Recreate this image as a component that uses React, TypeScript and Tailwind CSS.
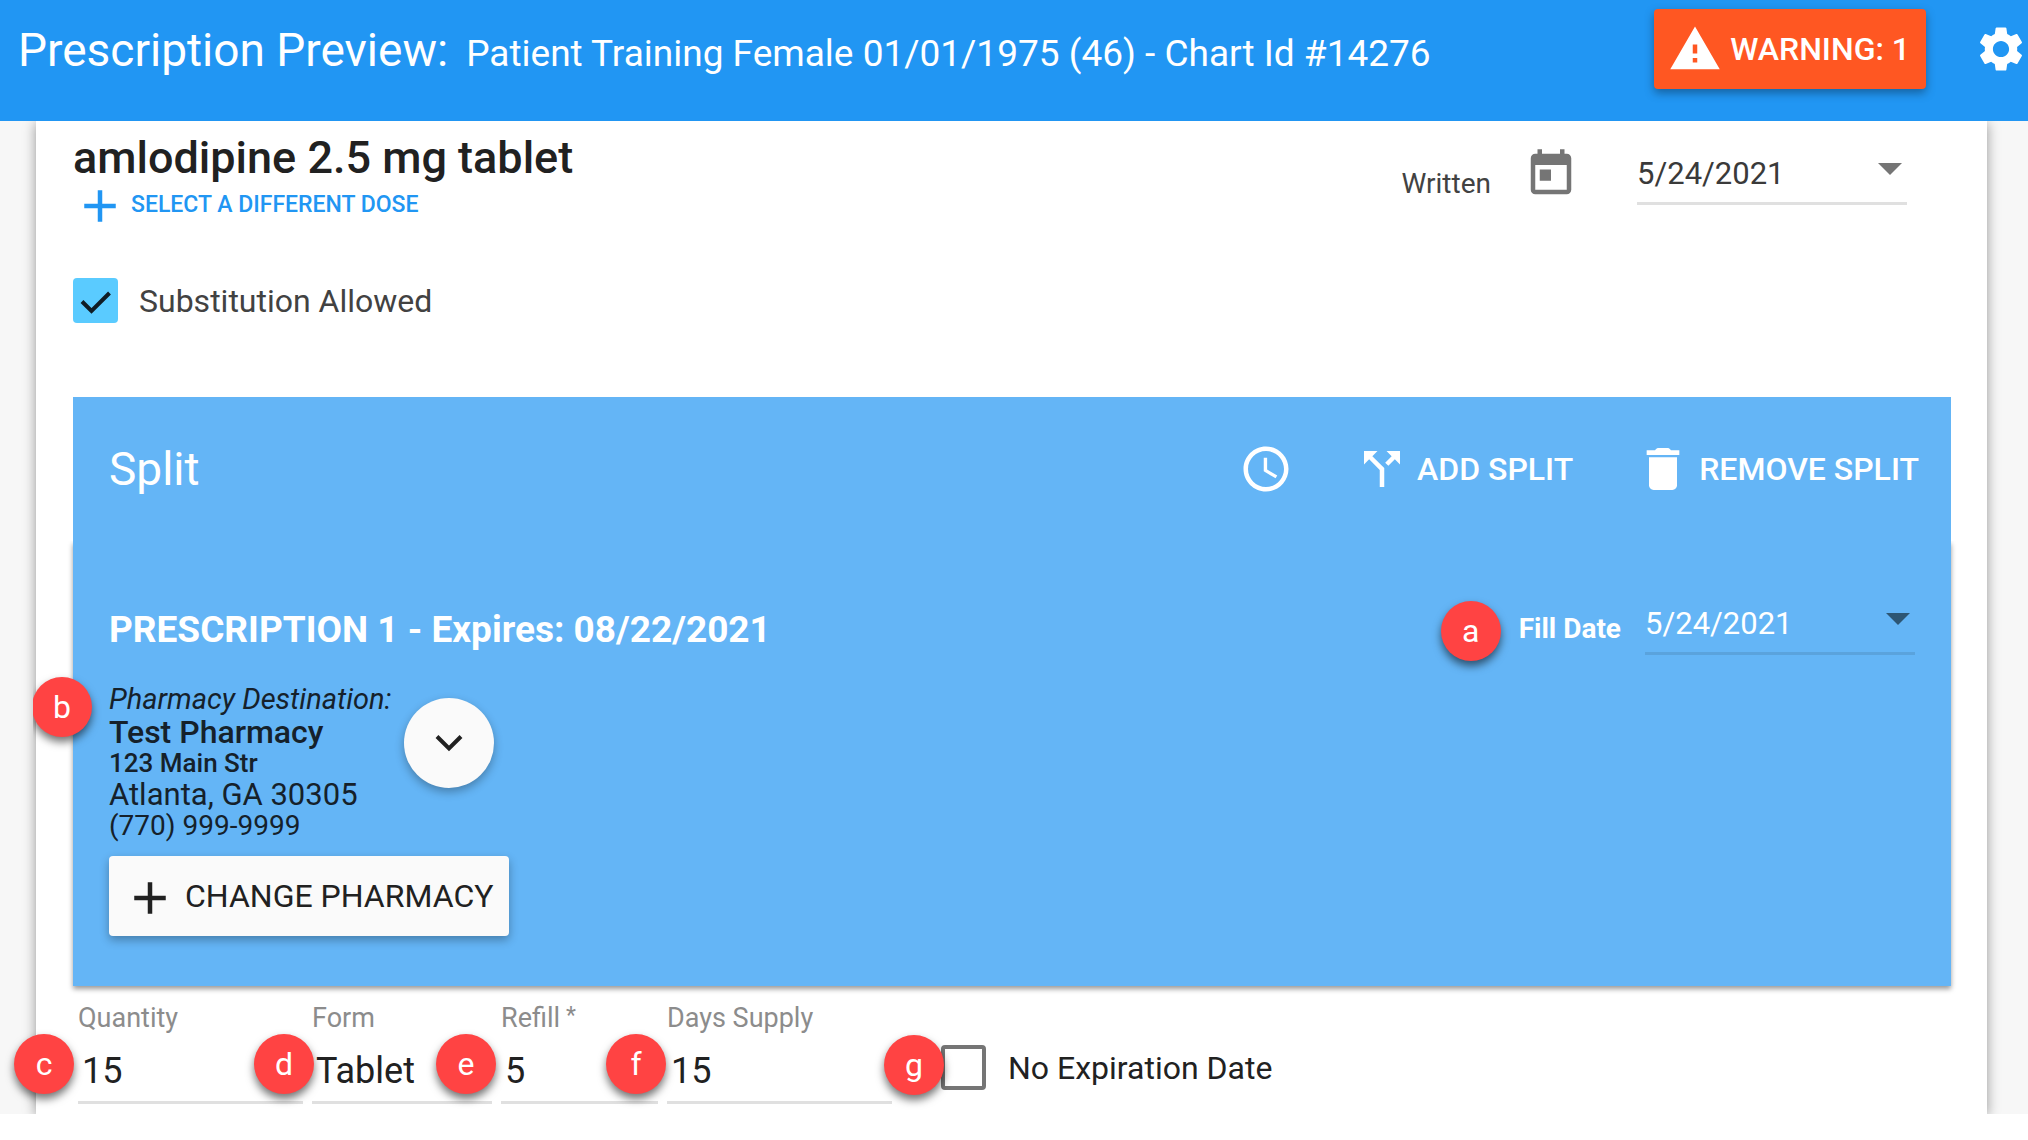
import { useState } from "react";
import {
  MdAccessTime,
  MdAdd,
  MdCallSplit,
  MdSettings,
  MdToday,
  MdWarning,
} from "react-icons/md";

const dates = ["5/24/2021", "5/25/2021", "5/26/2021"];

const fields = [
  { id: "quantity", label: "Quantity", value: "15", badge: "c", width: "w-[225px]", badgePos: "-left-16" },
  { id: "form", label: "Form", value: "Tablet", badge: "d", width: "w-[180px]", badgePos: "-left-[58px]" },
  { id: "refill", label: "Refill", required: true, value: "5", badge: "e", width: "w-[157px]", badgePos: "-left-[65px]" },
  { id: "days", label: "Days Supply", value: "15", badge: "f", width: "w-[225px]", badgePos: "-left-[61px]" },
];

function Badge({ letter, className }: { letter: string; className: string }) {
  return (
    <span
      className={`absolute z-10 flex size-[60px] items-center justify-center rounded-full bg-[#ff4343] text-[32px] leading-none text-white shadow-[0_5px_8px_rgba(0,0,0,0.55)] ${className}`}
    >
      {letter}
    </span>
  );
}

function TrashIcon() {
  return (
    <svg viewBox="0 0 24 24" className="size-14 fill-white">
      <path d="M6 19c0 1.100.9 2 2 2h8c1.100 0 2-.9 2-2V7H6z" />
      <path d="M5 4h3.600C9 3.200 9.600 3 10.200 3h3.600c.6 0 1.200.2 1.600 1H19v2H5z" />
    </svg>
  );
}

function DateSelect({ id, label, light }: { id: string; label: string; light?: boolean }) {
  const [date, setDate] = useState(dates[0]);

  return (
    <div
      className={`flex h-[62px] w-[270px] items-center border-b-3 pr-[5px] ${
        light ? "border-[#5aa3dd] text-white" : "border-[#e0e0e0] text-[#3a3a3a]"
      }`}
    >
      <select
        id={id}
        aria-label={label}
        value={date}
        onChange={(e) => setDate(e.target.value)}
        className="min-w-0 flex-1 appearance-none bg-transparent pt-[3px] text-[31px] outline-none"
      >
        {dates.map((d) => (
          <option key={d} className="text-black">
            {d}
          </option>
        ))}
      </select>
      <svg viewBox="0 0 24 12" className={`mb-2 h-3 w-6 ${light ? "fill-[#2d5674]" : "fill-[#757575]"}`}>
        <path d="M0 0h24L12 12z" />
      </svg>
    </div>
  );
}

export default function App() {
  const [substitution, setSubstitution] = useState(true);
  const [noExpiration, setNoExpiration] = useState(false);
  const [values, setValues] = useState<Record<string, string>>(
    Object.fromEntries(fields.map((f) => [f.id, f.value]))
  );

  return (
    <div className="min-h-screen bg-white font-[Roboto,sans-serif] text-[#212121]">
      <header className="flex items-center justify-between bg-[#2196f3] pt-[9px] pb-8 pl-[18px] text-white">
        <div className="flex items-baseline gap-[18px] pt-1.5 whitespace-nowrap">
          <h1 className="text-[46px] leading-[52px]">Prescription Preview:</h1>
          <h2 className="text-[37px] leading-[52px]">
            Patient Training Female 01/01/1975 (46) - Chart Id #14276
          </h2>
        </div>
        <div className="flex items-center gap-12">
          <button className="flex h-20 items-center gap-2 rounded-sm bg-[#ff5722] pr-4 pl-3.5 text-[32px] font-medium whitespace-nowrap shadow-[0_4px_10px_rgba(0,0,0,0.35)]">
            <MdWarning className="size-[54px]" />
            WARNING: 1
          </button>
          <button aria-label="Settings">
            <MdSettings className="size-[54px]" />
          </button>
        </div>
      </header>

      <main className="overflow-hidden bg-[#f7f7f7] pr-[41px] pl-9">
        <div className="bg-white pt-[13px] pr-9 pb-2.5 pl-[37px] shadow-[0_2px_12px_rgba(0,0,0,0.4)]">
          <div className="flex items-start justify-between">
            <div>
              <h2 className="text-[45px] leading-[48px] font-medium">amlodipine 2.5 mg tablet</h2>
              <button className="flex h-[46px] items-center gap-1 text-[23px] font-medium text-[#2196f3]">
                <MdAdd className="mt-0.5 size-[54px]" />
                SELECT A DIFFERENT DOSE
              </button>
            </div>
            <div className="mt-[9px] mr-[44px] flex items-center">
              <label htmlFor="written" className="mr-[33px] self-end text-[28px] leading-[42px] text-[#424242]">
                Written
              </label>
              <MdToday className="mr-[59px] size-[54px] text-[#757575]" />
              <DateSelect id="written" label="Written date" />
            </div>
          </div>

          <label className="mt-[50px] flex w-fit items-center gap-[21px] text-[32px] leading-[45px] text-[#424242]">
            <span className="grid size-[45px]">
              <input
                type="checkbox"
                checked={substitution}
                onChange={(e) => setSubstitution(e.target.checked)}
                className="peer col-start-1 row-start-1 size-[45px] appearance-none rounded-sm border-4 border-[#757575] checked:border-0 checked:bg-[#5acbff]"
              />
              <svg
                viewBox="0 0 45 45"
                className="pointer-events-none invisible col-start-1 row-start-1 fill-none stroke-[#0f1c24] stroke-4 peer-checked:visible"
              >
                <path d="M9 23.500l9.500 9.500L36.500 15" />
              </svg>
            </span>
            <span className="-mb-0.5">Substitution Allowed</span>
          </label>

          <section className="mt-[74px] text-white">
            <div className="flex h-36 items-center justify-between bg-[#64b5f6] pr-8 pl-9">
              <h3 className="text-[46px] leading-[52px]">Split</h3>
              <div className="flex items-center gap-[62px] text-[32px] font-medium">
                <button aria-label="History">
                  <MdAccessTime className="size-[54px]" />
                </button>
                <button className="flex items-center gap-2">
                  <MdCallSplit className="size-[54px]" />
                  ADD SPLIT
                </button>
                <button className="flex items-center gap-2">
                  <TrashIcon />
                  REMOVE SPLIT
                </button>
              </div>
            </div>

            <div className="bg-[#64b5f6] pt-[52px] pr-9 pb-[50px] pl-9 shadow-[0_3px_5px_rgba(0,0,0,0.4)] [clip-path:inset(0_-12px_-16px_-40px)]">
              <div className="flex items-end justify-between">
                <h4 className="text-[37px] leading-[50px] font-bold">PRESCRIPTION 1 - Expires: 08/22/2021</h4>
                <div className="relative flex items-end gap-6">
                  <Badge letter="a" className="-left-[78px] top-2" />
                  <label htmlFor="fill" className="text-[28px] leading-[52px] font-bold">
                    Fill Date
                  </label>
                  <DateSelect id="fill" label="Fill date" light />
                </div>
              </div>

              <div className="relative mt-7 flex items-start gap-3 text-[#15212b]">
                <Badge letter="b" className="-left-[77px] -top-1.5" />
                <address className="not-italic">
                  <p className="text-[29px] leading-[33px] italic">Pharmacy Destination:</p>
                  <p className="text-[32px] leading-[32px] font-medium">Test Pharmacy</p>
                  <p className="text-[26px] leading-[31px] font-medium">123 Main Str</p>
                  <p className="text-[31px] leading-[31px]">Atlanta, GA 30305</p>
                  <p className="text-[28px] leading-[32px]">(770) 999-9999</p>
                </address>
                <button
                  aria-label="Pharmacy details"
                  className="mt-[15px] flex size-[90px] items-center justify-center rounded-full bg-[#fafafa] shadow-[0_4px_10px_rgba(0,0,0,0.3)]"
                >
                  <svg viewBox="0 0 28 18" className="h-[18px] w-7 fill-none stroke-[#212121] stroke-4">
                    <path d="M2 2.500l12 12 12-12" />
                  </svg>
                </button>
              </div>

              <button className="mt-3.5 flex h-20 items-center gap-2 rounded-sm bg-[#fafafa] pr-4 pl-3.5 text-[32px] text-[#212121] shadow-[0_4px_10px_rgba(0,0,0,0.3)]">
                <MdAdd className="mt-1 size-[54px]" />
                CHANGE PHARMACY
              </button>
            </div>
          </section>

          <div className="flex items-end gap-[9px] pt-4 pl-[5px]">
            {fields.map((f) => (
              <div key={f.id} className={`relative ${f.width}`}>
                <label htmlFor={f.id} className="flex gap-1.5 text-[27px] leading-[32px] text-[#8c8c8c]">
                  {f.label}
                  {f.required && <span className="text-[23px] leading-[28px]">*</span>}
                </label>
                <input
                  id={f.id}
                  value={values[f.id]}
                  onChange={(e) => setValues({ ...values, [f.id]: e.target.value })}
                  className="h-[70px] w-full border-b-3 border-[#e0e0e0] pt-1.5 pl-1 text-[36px] outline-none"
                />
                <Badge letter={f.badge} className={`top-8 ${f.badgePos}`} />
              </div>
            ))}
            <label className="relative mb-3.5 ml-10 flex items-center gap-[22px] text-[32px] leading-[45px]">
              <Badge letter="g" className="-left-[57px] -top-2.5" />
              <input
                type="checkbox"
                checked={noExpiration}
                onChange={(e) => setNoExpiration(e.target.checked)}
                className="size-[45px] appearance-none rounded-sm border-4 border-[#757575] checked:bg-[#5acbff]"
              />
              <span className="-mb-0.5">No Expiration Date</span>
            </label>
          </div>
        </div>
      </main>
    </div>
  );
}
